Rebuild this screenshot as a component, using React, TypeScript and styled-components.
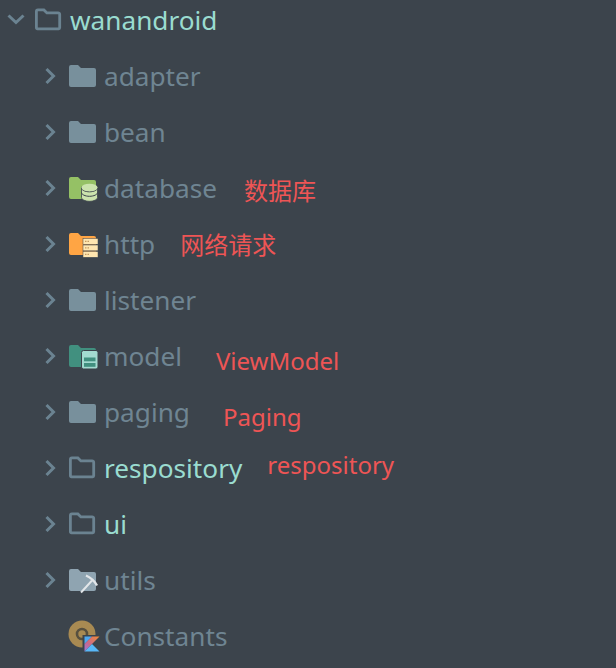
import styled, { createGlobalStyle } from 'styled-components';
import type { ReactNode } from 'react';

const GlobalStyle = createGlobalStyle`
  html, body {
    margin: 0;
    padding: 0;
    background: #3c444c;
  }
`;

const BG = '#3c444c';

const Svg = styled.svg`
  display: block;
  overflow: visible;
`;

const Folder = ({ color = '#78909c', children }: { color?: string; children?: ReactNode }) => (
  <Svg width="30" height="30" viewBox="0 0 30 30">
    <path
      d="M1 6a2 2 0 0 1 2-2h7l3 3h13a2 2 0 0 1 2 2v15a2 2 0 0 1-2 2H3a2 2 0 0 1-2-2z"
      fill={color}
    />
    {children}
  </Svg>
);

const OpenFolder = () => (
  <Svg width="30" height="30" viewBox="0 0 30 30">
    <path
      d="M2.4 6.400a1.500 1.500 0 0 1 1.500-1.500h6l3 3h11.300a1.500 1.500 0 0 1 1.500 1.500v13.400a1 1 0 0 1-1 1H3.400a1 1 0 0 1-1-1z"
      fill="none"
      stroke="#6b8391"
      strokeWidth="2.800"
    />
  </Svg>
);

const Chevron = ({ open }: { open?: boolean }) => (
  <Svg width="20" height="20" viewBox="0 0 20 20">
    <path
      d={open ? 'M2.500 5.500l7.500 7 7.500-7' : 'M5.500 3l7 7-7 7'}
      fill="none"
      stroke="#6b8391"
      strokeWidth="3"
    />
  </Svg>
);

const Database = () => (
  <Folder color="#95c165">
    <path d="M13.500 14v10.500c0 2 3.600 3.800 8 3.800s8-1.800 8-3.800V14z" fill="#cbe3ad" stroke={BG} strokeWidth="0.800" />
    <path d="M13.500 19.500c0 2 3.600 3.800 8 3.800s8-1.800 8-3.800" fill="none" stroke={BG} />
    <path d="M13.500 15c0 2 3.600 3.800 8 3.800s8-1.800 8-3.800" fill="none" stroke={BG} />
    <ellipse cx="21.500" cy="14.500" rx="8" ry="3.800" fill="#cbe3ad" />
  </Folder>
);

const Server = () => (
  <Folder color="#ffa544">
    <g stroke={BG} strokeWidth="0.500">
      <rect x="15" y="9.500" width="15" height="5.800" fill="#ffe6b0" />
      <rect x="15" y="16" width="15" height="5.800" fill="#ffe6b0" />
      <rect x="15" y="22.500" width="15" height="5.800" fill="#ffe6b0" />
    </g>
    <path d="M17 12.400h4M17 18.900h4M17 25.400h4" stroke="#c49a62" strokeWidth="1.400" strokeDasharray="1.500 1" />
  </Folder>
);

const ModelFolder = () => (
  <Folder color="#41907f">
    <rect x="13.500" y="9.500" width="16.500" height="18.500" rx="2" fill="#a3dbd0" stroke={BG} />
    <rect x="16" y="16.500" width="11.500" height="3.800" fill="#41907f" />
    <rect x="16" y="22" width="11.500" height="3.800" fill="#41907f" />
  </Folder>
);

const ToolFolder = () => (
  <Folder color="#8fa4b1">
    <path d="M13 27.500L24 15.500" stroke="#e2e6e9" strokeWidth="2" />
    <path d="M18 10.500c4.500 2 8.500 5.500 11 10" fill="none" stroke="#e2e6e9" strokeWidth="2.400" />
  </Folder>
);

const KotlinClass = () => (
  <Svg width="34" height="32" viewBox="0 0 34 32">
    <defs>
      <linearGradient id="kotlinBand" x1="1" y1="0" x2="0" y2="1">
        <stop offset="0" stopColor="#f58a2e" />
        <stop offset="0.6" stopColor="#c7698f" />
        <stop offset="1" stopColor="#9a78d8" />
      </linearGradient>
    </defs>
    <circle cx="14" cy="14" r="13.500" fill="#a88a52" />
    <circle cx="14" cy="14" r="5" fill="none" stroke="#57503f" strokeWidth="2.600" />
    <rect x="14.500" y="15" width="18" height="17.500" fill={BG} />
    <path d="M16.500 16.500H24L16.500 24z" fill="#4fa8ef" />
    <path d="M24 16.500h7.500L16.500 31.500V24z" fill="url(#kotlinBand)" />
    <path d="M16.500 31.500L24 24l7.500 7.500z" fill="#58b8f8" />
  </Svg>
);

const Tree = styled.div`
  width: 616px;
  height: 668px;
  overflow: hidden;
  background: ${BG};
  font-family: 'Noto Sans', sans-serif;
`;

const Row = styled.div<{ $depth: number }>`
  display: flex;
  align-items: center;
  height: 56px;
  padding-left: ${({ $depth }) => ($depth ? 41 : 6)}px;
  &:first-of-type {
    margin-top: -8px;
  }
`;

const Arrow = styled.span<{ $root?: boolean }>`
  display: flex;
  width: ${({ $root }) => ($root ? 28 : 27)}px;
  height: 20px;
`;

const Icon = styled.span`
  display: flex;
  width: 36px;
`;

const Name = styled.span<{ $changed?: boolean }>`
  font-size: 26.2px;
  line-height: 32px;
  white-space: nowrap;
  color: ${({ $changed }) => ($changed ? '#9adcd0' : '#6f8592')};
`;

const Note = styled.span<{ $gap: number; $drop: number }>`
  margin-left: ${({ $gap }) => $gap}px;
  position: relative;
  top: ${({ $drop }) => $drop}px;
  font-family: 'Noto Sans', 'Noto Sans CJK SC', sans-serif;
  font-size: 24px;
  white-space: nowrap;
  color: #ee5555;
`;

const rows = [
  { name: 'adapter', icon: <Folder /> },
  { name: 'bean', icon: <Folder /> },
  { name: 'database', icon: <Database />, note: '数据库', gap: 27, drop: 1 },
  { name: 'http', icon: <Server />, note: '网络请求', gap: 25, drop: -1 },
  { name: 'listener', icon: <Folder /> },
  { name: 'model', icon: <ModelFolder />, note: 'ViewModel', gap: 34, drop: 4 },
  { name: 'paging', icon: <Folder />, note: 'Paging', gap: 33, drop: 4 },
  { name: 'respository', icon: <OpenFolder />, changed: true, note: 'respository', gap: 25, drop: -4 },
  { name: 'ui', icon: <OpenFolder />, changed: true },
  { name: 'utils', icon: <ToolFolder /> },
];

export default function App() {
  return (
    <Tree>
      <GlobalStyle />
      <Row $depth={0}>
        <Arrow $root>
          <Chevron open />
        </Arrow>
        <Icon>
          <OpenFolder />
        </Icon>
        <Name $changed>wanandroid</Name>
      </Row>
      {rows.map((row) => (
        <Row $depth={1} key={row.name}>
          <Arrow>
            <Chevron />
          </Arrow>
          <Icon>{row.icon}</Icon>
          <Name $changed={row.changed}>{row.name}</Name>
          {row.note && (
            <Note $gap={row.gap ?? 0} $drop={row.drop ?? 0}>
              {row.note}
            </Note>
          )}
        </Row>
      ))}
      <Row $depth={1}>
        <Arrow />
        <Icon>
          <KotlinClass />
        </Icon>
        <Name>Constants</Name>
      </Row>
    </Tree>
  );
}
